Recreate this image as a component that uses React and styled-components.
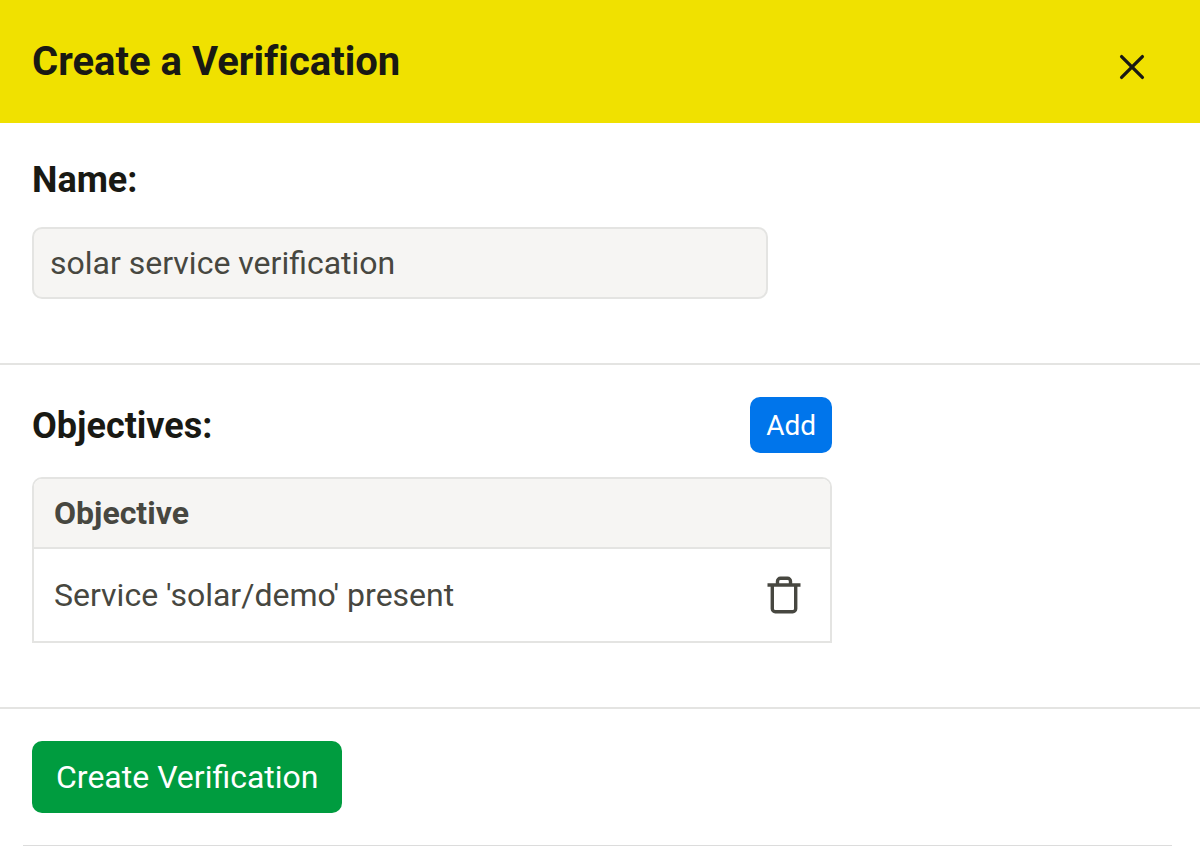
import React, { useState } from "react";
import styled, { createGlobalStyle } from "styled-components";

const GlobalStyle = createGlobalStyle`
  *, *::before, *::after { box-sizing: border-box; }
  body {
    margin: 0;
    background: #fff;
    color: #474740;
    font-family: Roboto, "Liberation Sans", sans-serif;
    font-size: 32px;
    line-height: 40px;
  }
  button, input { font-family: inherit; }
`;

const Header = styled.header`
  display: flex;
  justify-content: space-between;
  align-items: flex-start;
  padding: 32px 48px 32px 32px;
  background: #f0e100;
  color: #191913;
`;

const Title = styled.h1`
  margin: 0;
  font-size: 40px;
  line-height: 59px;
  font-weight: 700;
  font-variant-ligatures: none;
`;

const IconButton = styled.button`
  display: flex;
  align-items: center;
  justify-content: center;
  padding: 0;
  border: 0;
  background: transparent;
  color: inherit;
  cursor: pointer;
`;

const CloseButton = styled(IconButton)`
  width: 40px;
  height: 40px;
  margin-top: 15px;
`;

const Section = styled.section`
  padding: 32px 32px 64px;
  border-bottom: 2px solid #e4e4e2;
`;

const labelText = `
  margin: 0;
  padding-top: 2px;
  color: #191913;
  font-size: 36px;
  line-height: 46px;
  font-weight: 700;
`;

const Label = styled.label`
  display: block;
  ${labelText}
`;

const SectionTitle = styled.h2`
  ${labelText}
`;

const TextInput = styled.input`
  display: block;
  width: 100%;
  max-width: 736px;
  height: 72px;
  margin-top: 24px;
  padding: 0 16px;
  border: 2px solid #e4e4e2;
  border-radius: 10px;
  background: #f6f5f3;
  color: #474740;
  font-size: 32px;
`;

const Objectives = styled.div`
  max-width: 800px;
`;

const ObjectivesBar = styled.div`
  display: flex;
  justify-content: space-between;
  align-items: center;
  margin-bottom: 24px;
`;

const Button = styled.button`
  height: ${(p) => (p.$large ? "72px" : "56px")};
  padding: ${(p) => (p.$large ? "0 24px" : "0 16px")};
  border: 0;
  border-radius: 10px;
  background: ${(p) => (p.$large ? "#009c3f" : "#0075eb")};
  color: #fff;
  font-size: ${(p) => (p.$large ? "32px" : "28px")};
  cursor: pointer;
`;

const Table = styled.table`
  width: 100%;
  border: 2px solid #e4e4e2;
  border-radius: 10px 10px 0 0;
  border-collapse: separate;
  border-spacing: 0;
`;

const HeadCell = styled.th`
  height: 70px;
  padding: 0 20px;
  border-bottom: 2px solid #e4e4e2;
  border-radius: 8px 8px 0 0;
  background: #f6f5f3;
  text-align: left;
  font-weight: 700;
`;

const Cell = styled.td`
  height: 92px;
  padding: 0 20px;
`;

const ActionCell = styled(Cell)`
  width: 84px;
  padding: 0 28px 0 20px;
`;

const Actions = styled.div`
  padding: 32px;
`;

const Rule = styled.hr`
  height: 1px;
  margin: 0 28px 0 23px;
  border: 0;
  background: #dcdcdc;
`;

const CloseIcon = () => (
  <svg width="28" height="28" viewBox="0 0 28 28" fill="none" stroke="currentColor" strokeWidth="3.3" strokeLinecap="round" aria-hidden="true">
    <path d="M3.6 3.6l20.8 20.8M24.4 3.6l-20.8 20.8" />
  </svg>
);

const TrashIcon = () => (
  <svg width="36" height="40" viewBox="0 0 36 40" fill="none" stroke="currentColor" strokeWidth="3.4" aria-hidden="true">
    <path d="M1.5 10h33" />
    <path d="M11.5 10V6.2a3 3 0 0 1 3-3h7a3 3 0 0 1 3 3V10" />
    <path d="M6.3 10v23.7a3 3 0 0 0 3 3h17.4a3 3 0 0 0 3-3V10" />
  </svg>
);

export default function App() {
  const [name, setName] = useState("solar service verification");
  const [objectives, setObjectives] = useState(["Service 'solar/demo' present"]);
  const remove = (index) => setObjectives(objectives.filter((_, i) => i !== index));

  return (
    <>
      <GlobalStyle />
      <Header>
        <Title>Create a Verification</Title>
        <CloseButton type="button" aria-label="Close">
          <CloseIcon />
        </CloseButton>
      </Header>
      <main>
        <Section>
          <Label htmlFor="name">Name:</Label>
          <TextInput id="name" value={name} onChange={(e) => setName(e.target.value)} />
        </Section>
        <Section>
          <Objectives>
            <ObjectivesBar>
              <SectionTitle>Objectives:</SectionTitle>
              <Button type="button">Add</Button>
            </ObjectivesBar>
            <Table>
              <thead>
                <tr>
                  <HeadCell colSpan={2}>Objective</HeadCell>
                </tr>
              </thead>
              <tbody>
                {objectives.map((objective, index) => (
                  <tr key={objective}>
                    <Cell>{objective}</Cell>
                    <ActionCell>
                      <IconButton type="button" aria-label="Delete objective" onClick={() => remove(index)}>
                        <TrashIcon />
                      </IconButton>
                    </ActionCell>
                  </tr>
                ))}
              </tbody>
            </Table>
          </Objectives>
        </Section>
        <Actions>
          <Button type="button" $large>Create Verification</Button>
        </Actions>
      </main>
      <Rule />
    </>
  );
}
